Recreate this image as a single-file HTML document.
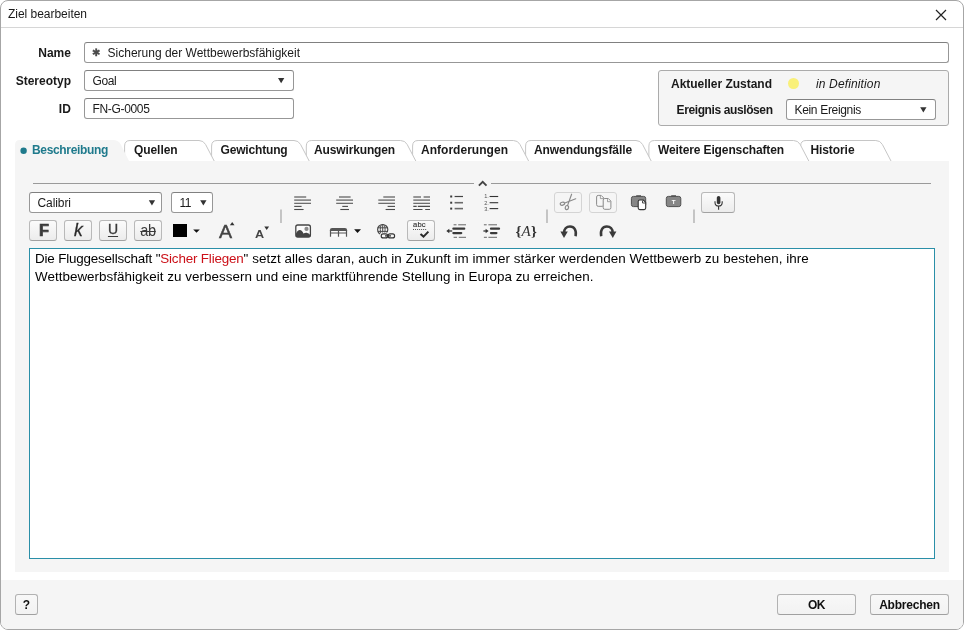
<!DOCTYPE html>
<html lang="de">
<head>
<meta charset="utf-8">
<title>Ziel bearbeiten</title>
<style>
*{box-sizing:border-box;margin:0;padding:0}
html,body{width:964px;height:630px;overflow:hidden;background:#fff}
body{font-family:"Liberation Sans",sans-serif;font-size:12px;color:#1a1a1a;position:relative}
.abs{position:absolute}
.t{display:inline-block;white-space:nowrap}
#win{will-change:transform;position:absolute;left:0;top:0;width:964px;height:630px;border:1px solid #a6a6a6;border-radius:8px;background:#fff}
#title{position:absolute;left:0;top:0;width:962px;height:27px;border-bottom:1px solid #d6d6d6}
#title .tt{position:absolute;left:7px;top:5px;font-size:12px;line-height:16px;color:#1a1a1a;white-space:nowrap}
#footer{position:absolute;left:0;top:579px;width:962px;height:49px;background:#f5f5f5;border-radius:0 0 7px 7px}
.lbl{position:absolute;font-weight:bold;font-size:12px;line-height:16px;text-align:right;white-space:nowrap;color:#1a1a1a}
.inp{position:absolute;border:1px solid #979797;border-top-color:#808080;border-radius:3px;background:#fff;font-size:12px;line-height:18px;white-space:nowrap;color:#1a1a1a;padding:1px 0 0 7.5px;height:21px}
.btn{position:absolute;border:1px solid #b2b2b2;border-bottom-color:#a0a0a0;border-radius:3px;background:linear-gradient(#f8f8f8,#f2f2f2);padding-top:1px;font-weight:bold;font-size:12px;line-height:19px;text-align:center;color:#111;white-space:nowrap}
#panel{position:absolute;left:14px;top:160px;width:934px;height:411px;background:#f5f5f5}
.tab{position:absolute;top:139px;height:21px;font-weight:bold;font-size:12px;line-height:20px;white-space:nowrap;color:#1a1a1a}
#editor{position:absolute;left:28px;top:247px;width:906px;height:311px;border:1px solid #2a8fa8;background:#fff;font-size:13.4px;line-height:18px;padding:1px 0 0 5px;color:#000;white-space:nowrap}
#editor i{font-style:normal;color:#cc1018}
.tbtn{position:absolute;border:1px solid #b9b9b9;border-bottom-color:#a2a2a2;border-radius:3px;background:linear-gradient(#fbfbfb,#ececec)}
.tbtn.dis{background:#f5f5f5;border-color:#d4d4d4}
</style>
</head>
<body>
<div id="win">
  <div id="title"><span class="tt"><span class="t" id="k10" style="letter-spacing:-0.026px">Ziel bearbeiten</span></span>
    <svg class="abs" style="left:934px;top:8px" width="12" height="12" viewBox="0 0 12 12"><path d="M1 1 L11 11 M11 1 L1 11" stroke="#222" stroke-width="1.2" fill="none"/></svg>
  </div>

  <div class="lbl" style="left:0;width:70px;top:44px"><span class="t" id="k11" style="letter-spacing:0.028px">Name</span></div>
  <div class="inp" style="left:83px;top:41px;width:865px;padding-left:7px"><span style="font-size:9.5px;color:#4a4a4a;margin-right:7.6px;position:relative;top:-0.7px;-webkit-text-stroke:0.35px #4a4a4a">✱</span><span class="t" id="k12" style="letter-spacing:-0.005px">Sicherung der Wettbewerbsfähigkeit</span></div>
  <div class="lbl" style="left:0;width:70px;top:72px"><span class="t" id="k13" style="letter-spacing:-0.007px">Stereotyp</span></div>
  <div class="inp" style="left:83px;top:69px;width:210px"><span class="t" id="k14" style="letter-spacing:-0.390px">Goal</span></div>
  <div class="lbl" style="left:0;width:70px;top:100px"><span class="t" id="k15" style="letter-spacing:0.150px">ID</span></div>
  <div class="inp" style="left:83px;top:97px;width:210px"><span class="t" id="k16" style="letter-spacing:-0.337px">FN-G-0005</span></div>

  <div class="abs" style="left:657px;top:69px;width:291px;height:56px;border:1px solid #ababab;border-radius:3px;background:#f5f5f5"></div>
  <div class="lbl" style="left:600px;width:171px;top:75px"><span class="t" id="k17" style="letter-spacing:-0.021px">Aktueller Zustand</span></div>
  <div class="abs" style="left:787.2px;top:77.3px;width:10.8px;height:10.8px;border-radius:50%;background:#f9f07a"></div>
  <div class="abs" style="left:815px;top:75px;font-style:italic;font-size:12px;line-height:16px;white-space:nowrap"><span class="t" id="k18" style="letter-spacing:0.138px">in Definition</span></div>
  <div class="lbl" style="left:600px;width:171.6px;top:101px"><span class="t" id="k19" style="letter-spacing:-0.394px">Ereignis auslösen</span></div>
  <div class="inp" style="left:785px;top:98px;width:150px"><span class="t" id="k20" style="letter-spacing:-0.325px">Kein Ereignis</span></div>

  <div id="panel"></div>
  <svg class="abs" style="left:0;top:0" width="962" height="628" viewBox="1 1 962 628">
<path d="M800.6 161 L800.6 146 Q800.6 140.5 806.1 140.5 L875.8 140.5 Q880.3 140.5 882.4 144.5 L891.0 161" fill="#fff" stroke="#c6c6c6" stroke-width="1"/>
<path d="M648.9 161 L648.9 146 Q648.9 140.5 654.4 140.5 L793.6 140.5 Q798.1 140.5 800.2 144.5 L808.8000000000001 161" fill="#fff" stroke="#c6c6c6" stroke-width="1"/>
<path d="M525.6 161 L525.6 146 Q525.6 140.5 531.1 140.5 L636 140.5 Q640.5 140.5 642.6 144.5 L651.2 161" fill="#fff" stroke="#c6c6c6" stroke-width="1"/>
<path d="M412.6 161 L412.6 146 Q412.6 140.5 418.1 140.5 L513.4 140.5 Q517.9 140.5 520.0 144.5 L528.6 161" fill="#fff" stroke="#c6c6c6" stroke-width="1"/>
<path d="M306.3 161 L306.3 146 Q306.3 140.5 311.8 140.5 L400.6 140.5 Q405.1 140.5 407.20000000000005 144.5 L415.8 161" fill="#fff" stroke="#c6c6c6" stroke-width="1"/>
<path d="M211.6 161 L211.6 146 Q211.6 140.5 217.1 140.5 L294 140.5 Q298.5 140.5 300.6 144.5 L309.2 161" fill="#fff" stroke="#c6c6c6" stroke-width="1"/>
<path d="M124.6 161 L124.6 146 Q124.6 140.5 130.1 140.5 L199 140.5 Q203.5 140.5 205.6 144.5 L214.2 161" fill="#fff" stroke="#c6c6c6" stroke-width="1"/>
<path d="M15 162 L15 145 Q15 140 20 140 L113 140 Q118.5 140 120.8 144.5 L129 161 L129 162 Z" fill="#f5f5f5"/>
<circle cx="23.6" cy="150.8" r="3.2" fill="#1f7a8c"/>
</svg>
  <div class="tab" style="left:31px;color:#1f7a8c"><span class="t" id="k0" style="letter-spacing:-0.335px">Beschreibung</span></div>
  <div class="tab" style="left:133px"><span class="t" id="k1" style="letter-spacing:-0.074px">Quellen</span></div>
  <div class="tab" style="left:219.5px"><span class="t" id="k2" style="letter-spacing:-0.167px">Gewichtung</span></div>
  <div class="tab" style="left:313px"><span class="t" id="k3" style="letter-spacing:-0.141px">Auswirkungen</span></div>
  <div class="tab" style="left:420px"><span class="t" id="k4" style="letter-spacing:0.025px">Anforderungen</span></div>
  <div class="tab" style="left:533px"><span class="t" id="k5" style="letter-spacing:-0.090px">Anwendungsfälle</span></div>
  <div class="tab" style="left:657px"><span class="t" id="k6" style="letter-spacing:-0.118px">Weitere Eigenschaften</span></div>
  <div class="tab" style="left:809.4px"><span class="t" id="k7" style="letter-spacing:-0.073px">Historie</span></div>
  <div class="inp" style="left:28px;top:191px;width:133px;line-height:18px"><span class="t" id="k8" style="letter-spacing:-0.088px">Calibri</span></div>
  <div class="inp" style="left:170px;top:191px;width:42px;line-height:18px"><span class="t" id="k9" style="letter-spacing:-0.534px">11</span></div>
  <div class="tbtn dis" style="left:553px;top:191px;width:28px;height:21px"></div>
  <div class="tbtn dis" style="left:588px;top:191px;width:28px;height:21px"></div>
  <div class="tbtn" style="left:700px;top:191px;width:34px;height:21px"></div>
  <div class="tbtn" style="left:28px;top:219px;width:28px;height:21px"></div>
  <div class="tbtn" style="left:63px;top:219px;width:28px;height:21px"></div>
  <div class="tbtn" style="left:98px;top:219px;width:28px;height:21px"></div>
  <div class="tbtn" style="left:133px;top:219px;width:28px;height:21px"></div>
  <div class="tbtn" style="left:406px;top:219px;width:28px;height:21px"></div>
  <div class="abs" style="left:28.7px;top:219px;width:28px;height:21px;line-height:21px;text-align:center;font-weight:bold;font-size:16px;color:#3a3a3a;transform:scaleX(1.02);-webkit-text-stroke:0.7px #3a3a3a">F</div>
  <div class="abs" style="left:63.3px;top:219.4px;width:28px;height:21px;line-height:20px;text-align:center;font-style:italic;font-size:17.5px;color:#2a2a2a;-webkit-text-stroke:0.3px #2a2a2a">k</div>
  <div class="abs" style="left:98px;top:218px;width:28px;height:21px;line-height:20px;text-align:center;font-size:14px;color:#3a3a3a;text-decoration:underline;text-underline-offset:2px;text-decoration-thickness:1px;-webkit-text-stroke:0.35px #3a3a3a">U</div>
  <div class="abs" style="left:133px;top:218.8px;width:28px;height:21px;line-height:20px;text-align:center;font-size:16.2px;letter-spacing:-0.4px;color:#3a3a3a;text-decoration:line-through;text-decoration-thickness:1px;transform:scaleX(0.9)">ab</div>
  <div class="abs" style="left:172px;top:223px;width:14px;height:13px;background:#000"></div>
  <div class="abs" style="left:217.6px;top:221px;font-size:18.5px;line-height:20px;color:#444;transform:scaleX(1.06);transform-origin:0 0;-webkit-text-stroke:0.45px #444">A</div>
  <div class="abs" style="left:254.2px;top:226.4px;font-size:11.5px;font-weight:bold;line-height:14px;color:#444;transform:scaleX(1.1);transform-origin:0 0">A</div>
  <div class="abs" style="left:514.6px;top:220.8px;font-family:'Liberation Serif',serif;font-size:15px;line-height:18px;color:#333;white-space:nowrap;letter-spacing:0.1px"><b>{</b><i>A</i><b>}</b></div>
  <div class="abs" style="left:412px;top:218.2px;font-size:7.6px;line-height:12px;color:#333;letter-spacing:0.17px;-webkit-text-stroke:0.15px #333">abc</div>
  <div id="editor"><span class="t" id="k21" style="letter-spacing:-0.171px">Die Fluggesellschaft "</span><i><span class="t" id="k22" style="letter-spacing:-0.165px">Sicher Fliegen</span></i><span class="t" id="k23" style="letter-spacing:0.060px">" setzt alles daran, auch in Zukunft im immer stärker werdenden Wettbewerb zu bestehen, ihre</span><br><span class="t" id="k24" style="letter-spacing:0.039px">Wettbewerbsfähigkeit zu verbessern und eine marktführende Stellung in Europa zu erreichen.</span></div>

  <div id="footer"></div>
  <div class="btn" style="left:14px;top:593px;width:23px;height:21px">?</div>
  <div class="btn" style="left:776px;top:593px;width:79px;height:21px"><span class="t" id="k25" style="letter-spacing:-0.600px">OK</span></div>
  <div class="btn" style="left:869px;top:593px;width:79px;height:21px"><span class="t" id="k26" style="letter-spacing:-0.221px">Abbrechen</span></div>
  <svg class="abs" style="left:0;top:0" width="962" height="628" viewBox="1 1 962 628">
  <path d="M33 183.5 H474 M491 183.5 H931" stroke="#9a9a9a" stroke-width="1" fill="none"/>
<path d="M478.9 185.6 L482.7 181.8 L486.5 185.6" stroke="#444" stroke-width="1.9" fill="none"/>
<path d="M278 78 H284.3 L281.15 83.3 Z" fill="#333"/>
<path d="M920.2 107.2 H926.5 L923.35 112.5 Z" fill="#333"/>
<path d="M148.8 200.3 H155.1 L151.95 205.6 Z" fill="#333"/>
<path d="M200.2 200.3 H206.5 L203.35 205.6 Z" fill="#333"/>
<path d="M294.2 197 H306.2" stroke="#777" stroke-width="1.5" fill="none"/><path d="M294.2 200.1 H311" stroke="#777" stroke-width="1.5" fill="none"/><path d="M294.2 203.3 H311" stroke="#555" stroke-width="1.1" fill="none"/><path d="M294.2 206.4 H301.6" stroke="#4a4a4a" stroke-width="1.1" fill="none"/><path d="M294.2 209.5 H303.6" stroke="#4a4a4a" stroke-width="1.1" fill="none"/>
<path d="M339 197 H350.6" stroke="#777" stroke-width="1.5" fill="none"/><path d="M336.2 200.1 H353" stroke="#777" stroke-width="1.5" fill="none"/><path d="M336.2 203.3 H353" stroke="#555" stroke-width="1.1" fill="none"/><path d="M342.3 206.4 H348" stroke="#4a4a4a" stroke-width="1.1" fill="none"/><path d="M340.3 209.5 H349" stroke="#4a4a4a" stroke-width="1.1" fill="none"/>
<path d="M383.3 197 H395" stroke="#777" stroke-width="1.5" fill="none"/><path d="M378.3 200.1 H395" stroke="#777" stroke-width="1.5" fill="none"/><path d="M378.3 203.3 H395" stroke="#555" stroke-width="1.1" fill="none"/><path d="M387.6 206.4 H395" stroke="#4a4a4a" stroke-width="1.1" fill="none"/><path d="M385.6 209.5 H395" stroke="#4a4a4a" stroke-width="1.1" fill="none"/>
<path d="M413.3 197 H421 M423.6 197 H430" stroke="#777" stroke-width="1.5" fill="none"/><path d="M413.3 200.1 H430" stroke="#777" stroke-width="1.5" fill="none"/><path d="M413.3 203.3 H430" stroke="#555" stroke-width="1.1" fill="none"/><path d="M413.3 206.4 H416.7 M417.8 206.4 H430" stroke="#4a4a4a" stroke-width="1.1" fill="none"/><path d="M413.3 209.5 H422.5 M425.2 209.5 H430" stroke="#4a4a4a" stroke-width="1.1" fill="none"/>
<rect x="450.2" y="195.5" width="2" height="2" fill="#3a3a3a"/>
<path d="M454.6 196.5 H463" stroke="#444" stroke-width="1.2"/>
<rect x="450.2" y="201.7" width="2" height="2" fill="#3a3a3a"/>
<path d="M454.6 202.7 H463" stroke="#6a6a6a" stroke-width="1.6"/>
<rect x="450.2" y="207.6" width="2" height="2" fill="#3a3a3a"/>
<path d="M454.6 208.6 H463" stroke="#6a6a6a" stroke-width="1.6"/>
<text x="484.2" y="198.4" font-family="Liberation Sans,sans-serif" font-size="5.6" fill="#555">1.</text>
<path d="M489.6 196.5 H498.2" stroke="#333" stroke-width="1.1"/>
<text x="484.2" y="204.6" font-family="Liberation Sans,sans-serif" font-size="5.6" fill="#555">2.</text>
<path d="M489.6 202.7 H498.2" stroke="#333" stroke-width="1.1"/>
<text x="484.2" y="210.5" font-family="Liberation Sans,sans-serif" font-size="5.6" fill="#555">3.</text>
<path d="M489.6 208.6 H498.2" stroke="#333" stroke-width="1.1"/>
<path d="M281 209.6 V223" stroke="#b0b0b0" stroke-width="1.4"/>
<path d="M547 209.6 V223" stroke="#b0b0b0" stroke-width="1.4"/>
<path d="M694 209.6 V223" stroke="#b0b0b0" stroke-width="1.4"/>
<g stroke="#8a8a8a" stroke-width="1.15" fill="none" stroke-linecap="round"><path d="M571.6 194.2 L567.6 205.4 M575.7 198.8 L564.8 203"/><ellipse cx="562.4" cy="203.7" rx="2.2" ry="1.5" transform="rotate(-15 562.4 203.7)"/><ellipse cx="566.9" cy="207.6" rx="1.6" ry="2.1" transform="rotate(15 566.9 207.6)"/></g>
<path d="M598.2 195.4 H601.1999999999999 L603.8 198.0 V204.70000000000002 Q603.8 206.3 602.1999999999999 206.3 H598.2 Q596.6 206.3 596.6 204.70000000000002 V197.0 Q596.6 195.4 598.2 195.4 Z" fill="#f6f6f6" stroke="#8c8c8c" stroke-width="1"/><path d="M600.4 196.0 V198.6 H603.4" fill="none" stroke="#8c8c8c" stroke-width="0.8"/>
<path d="M604.8000000000001 198.5 H608.3 L610.9 201.1 V207.70000000000002 Q610.9 209.3 609.3 209.3 H604.8000000000001 Q603.2 209.3 603.2 207.70000000000002 V200.1 Q603.2 198.5 604.8000000000001 198.5 Z" fill="#f6f6f6" stroke="#8c8c8c" stroke-width="1"/><path d="M607.5 199.1 V201.7 H610.5" fill="none" stroke="#8c8c8c" stroke-width="0.8"/>
<rect x="636.2" y="195.1" width="4.8" height="2" fill="#6a6a6a"/>
<rect x="631.4" y="196.4" width="14.3" height="10.2" rx="2" fill="#868686" stroke="#505050" stroke-width="1"/>
<path d="M639.8000000000001 200 H643.3000000000001 L645.7 202.4 V208.0 Q645.7 209.6 644.1 209.6 H639.8000000000001 Q638.2 209.6 638.2 208.0 V201.6 Q638.2 200 639.8000000000001 200 Z" fill="#fff" stroke="#333" stroke-width="1.1"/><path d="M642.5000000000001 200.6 V203.0 H645.3000000000001" fill="none" stroke="#333" stroke-width="0.8800000000000001"/>
<rect x="671.2" y="195.1" width="4.8" height="2" fill="#6a6a6a"/>
<rect x="666.3" y="196.4" width="14.5" height="10.2" rx="2" fill="#868686" stroke="#505050" stroke-width="1"/>
<text x="673.6" y="203.8" text-anchor="middle" font-family="Liberation Sans,sans-serif" font-weight="bold" font-size="6.2" fill="#fff">T</text>
<rect x="716.8" y="196" width="3.6" height="8.2" rx="1.8" fill="#333"/>
<path d="M715 201.2 V202.4 Q715 206 718.6 206 Q722.2 206 722.2 202.4 V201.2 M718.6 206 V209.8" fill="none" stroke="#333" stroke-width="1.1"/>
<path d="M193.2 229.4 H199.8 L196.5 232.8 Z" fill="#111"/>
<path d="M229.9 225.3 L232.2 222.1 L234.5 225.3 Z" fill="#333"/>
<path d="M264.3 226.4 H269.1 L266.7 229.9 Z" fill="#333"/>
<rect x="295.8" y="225" width="14.6" height="12" rx="2" fill="#fafafa" stroke="#444" stroke-width="1.3"/>
<circle cx="306.5" cy="228.9" r="2.1" fill="#8a8a8a"/>
<path d="M296 237 V233.5 Q297.5 230 299.8 230 Q302.2 230 303.4 233.6 Q305 232.6 306.6 232.8 Q309 233 310.2 235 V237 Z" fill="#444"/>
<path d="M330 236.8 V230.4 Q330 228 332.4 228 H344.6 Q347 228 347 230.4 V236.8" fill="#fbfbfb" stroke="none"/>
<path d="M329.9 231 V230 Q329.9 228 332 228 H345 Q347.1 228 347.1 230 V231 Z" fill="#555"/>
<path d="M330.5 230 V236.8 M338.5 230 V236.8 M346.5 230 V236.8" stroke="#555" stroke-width="1.2" fill="none"/>
<path d="M330 233 H347" stroke="#555" stroke-width="1" fill="none"/>
<path d="M354.1 229.2 H361 L357.55 232.9 Z" fill="#111"/>
<g fill="none" stroke="#4a4a4a" stroke-width="1"><circle cx="382.7" cy="229.6" r="5.1" stroke-width="1.2"/><ellipse cx="382.7" cy="229.6" rx="2.4" ry="5.1"/><path d="M382.7 224.5 V234.7 M377.8 227.8 H387.6 M377.8 231.4 H387.6"/></g>
<rect x="379.6" y="232.4" width="16.4" height="6.8" rx="3.4" fill="#f5f5f5"/>
<g fill="none" stroke="#333" stroke-width="1.15"><rect x="381.2" y="233.9" width="6.5" height="4" rx="2"/><rect x="388.1" y="233.9" width="6.5" height="4" rx="2"/><path d="M385 235.9 H391" stroke-width="1.3"/></g>
<path d="M413 229.5 H426.2" stroke="#555" stroke-width="1" stroke-dasharray="1 1.03" fill="none"/>
<path d="M420.5 233.9 L423.5 236.6 L428.4 231.6" stroke="#2a2a2a" stroke-width="2" fill="none"/>
<path d="M453.6 224.8 H456.5 M458.2 224.8 H466 M453.6 237.3 H457 M458.8 237.3 H466" stroke="#666" stroke-width="1" fill="none"/>
<path d="M453.4 228.7 H464.2 M453.4 233.1 H461.2" stroke="#3a3a3a" stroke-width="2.3" stroke-linecap="round" fill="none"/>
<path d="M446.3 231 L449.3 228.7 V233.3 Z" fill="#333"/><path d="M449 231 H452.2" stroke="#333" stroke-width="1.3"/>
<path d="M483.9 224.8 H486.7 M488.4 224.8 H497 M483.9 237.3 H486.9 M488.4 237.3 H497" stroke="#666" stroke-width="1" fill="none"/>
<path d="M491 228.7 H499 M491 233.1 H496.4" stroke="#3a3a3a" stroke-width="2.3" stroke-linecap="round" fill="none"/>
<path d="M488.6 231 L485.6 228.7 V233.3 Z" fill="#333"/><path d="M483.4 231 H486" stroke="#333" stroke-width="1.3"/>
<path d="M575.6 236.3 C576.8 230 574.2 226.5 570 226.5 C566.4 226.5 564.2 229 564.2 232.4" fill="none" stroke="#3a3a3a" stroke-width="2.5"/><path d="M560.4 231.4 H567.8 L564 237.9 Z" fill="#3a3a3a"/>
<path d="M601.2 236.3 C600.0 230 602.6 226.5 606.8 226.5 C610.4 226.5 612.6 229 612.6 232.4" fill="none" stroke="#3a3a3a" stroke-width="2.5"/><path d="M616.4 231.4 H609.0 L612.8 237.9 Z" fill="#3a3a3a"/>
  </svg>
</div>
</body>
</html>
